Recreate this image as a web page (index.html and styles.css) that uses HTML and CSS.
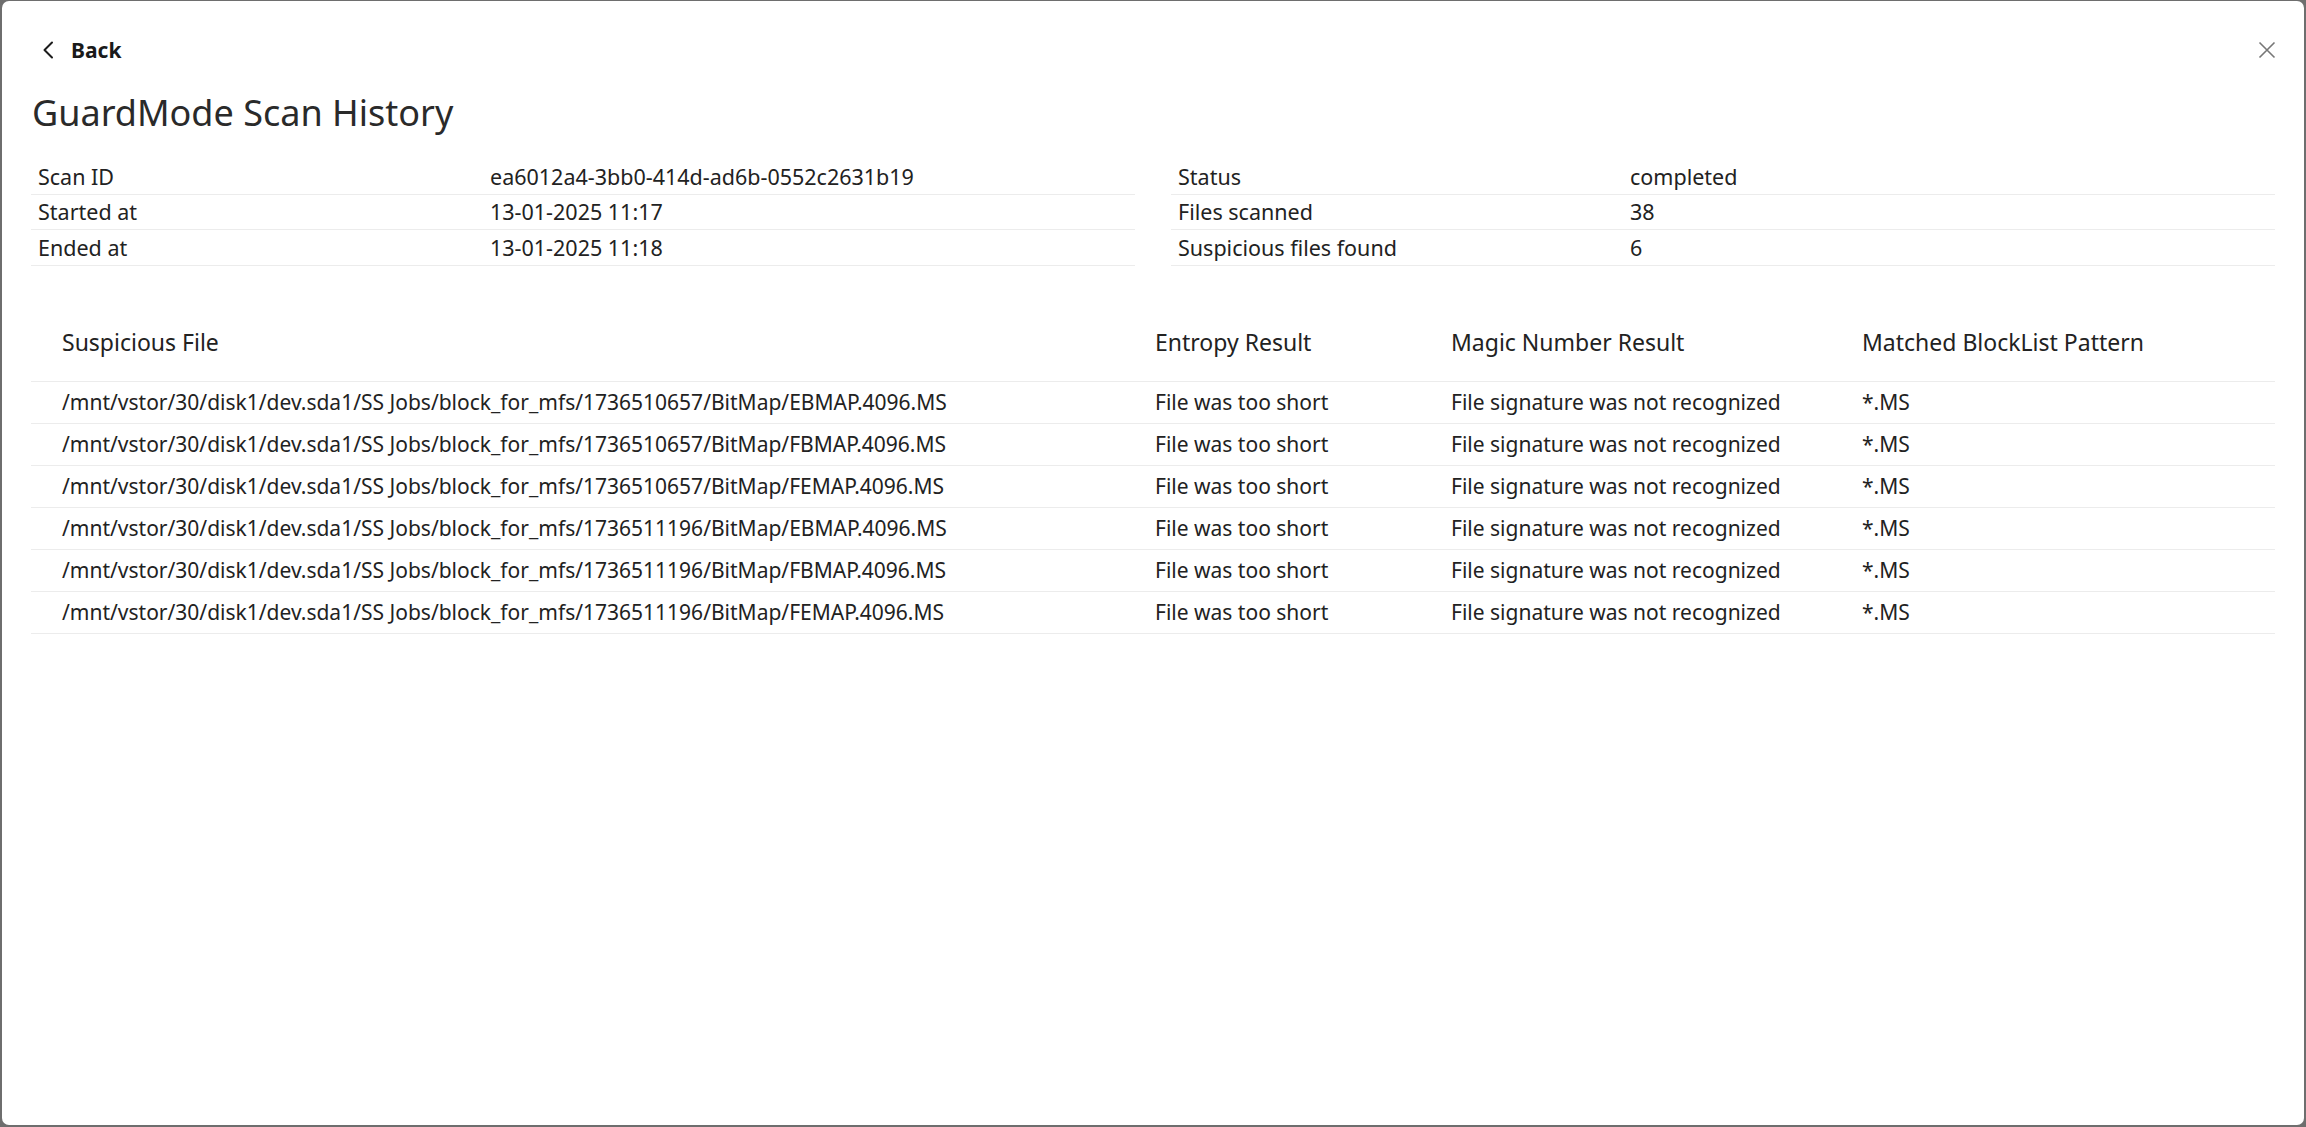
FILE: index.html
```html
<!DOCTYPE html>
<html lang="en">
<head>
    <meta charset="UTF-8">
    <meta name="viewport" content="width=device-width, initial-scale=1.0">
    <title>GuardMode Scan History</title>
    <link rel="stylesheet" href="styles.css">
</head>
<body>
    <div class="dialog">
        <div class="top-bar">
            <button class="back-btn">
                <svg class="back-icon" width="12" height="18" viewBox="0 0 12 18"><path d="M10 1.5 L2.5 9 L10 16.5" fill="none" stroke="#1c1c1c" stroke-width="2" stroke-linecap="round" stroke-linejoin="round"/></svg>
                <span>Back</span>
            </button>
            <button class="close-btn" aria-label="Close">
                <svg width="18" height="18" viewBox="0 0 18 18"><path d="M1.5 1.5 L16.5 16.5 M16.5 1.5 L1.5 16.5" fill="none" stroke="#777" stroke-width="1.6"/></svg>
            </button>
        </div>

        <h1 class="title">GuardMode Scan History</h1>

        <div class="summary">
            <div class="summary-table">
                <div class="summary-row"><div class="cell">Scan ID</div><div class="cell">ea6012a4-3bb0-414d-ad6b-0552c2631b19</div></div>
                <div class="summary-row"><div class="cell">Started at</div><div class="cell">13-01-2025 11:17</div></div>
                <div class="summary-row"><div class="cell">Ended at</div><div class="cell">13-01-2025 11:18</div></div>
            </div>
            <div class="summary-table">
                <div class="summary-row"><div class="cell">Status</div><div class="cell">completed</div></div>
                <div class="summary-row"><div class="cell">Files scanned</div><div class="cell">38</div></div>
                <div class="summary-row"><div class="cell">Suspicious files found</div><div class="cell">6</div></div>
            </div>
        </div>

        <table class="files-table">
            <thead>
                <tr>
                    <th class="col-file">Suspicious File</th>
                    <th class="col-entropy">Entropy Result</th>
                    <th class="col-magic">Magic Number Result</th>
                    <th>Matched BlockList Pattern</th>
                </tr>
            </thead>
            <tbody>
                <tr>
                    <td>/mnt/vstor/30/disk1/dev.sda1/SS Jobs/block_for_mfs/1736510657/BitMap/EBMAP.4096.MS</td>
                    <td>File was too short</td>
                    <td>File signature was not recognized</td>
                    <td>*.MS</td>
                </tr>
                <tr>
                    <td>/mnt/vstor/30/disk1/dev.sda1/SS Jobs/block_for_mfs/1736510657/BitMap/FBMAP.4096.MS</td>
                    <td>File was too short</td>
                    <td>File signature was not recognized</td>
                    <td>*.MS</td>
                </tr>
                <tr>
                    <td>/mnt/vstor/30/disk1/dev.sda1/SS Jobs/block_for_mfs/1736510657/BitMap/FEMAP.4096.MS</td>
                    <td>File was too short</td>
                    <td>File signature was not recognized</td>
                    <td>*.MS</td>
                </tr>
                <tr>
                    <td>/mnt/vstor/30/disk1/dev.sda1/SS Jobs/block_for_mfs/1736511196/BitMap/EBMAP.4096.MS</td>
                    <td>File was too short</td>
                    <td>File signature was not recognized</td>
                    <td>*.MS</td>
                </tr>
                <tr>
                    <td>/mnt/vstor/30/disk1/dev.sda1/SS Jobs/block_for_mfs/1736511196/BitMap/FBMAP.4096.MS</td>
                    <td>File was too short</td>
                    <td>File signature was not recognized</td>
                    <td>*.MS</td>
                </tr>
                <tr>
                    <td>/mnt/vstor/30/disk1/dev.sda1/SS Jobs/block_for_mfs/1736511196/BitMap/FEMAP.4096.MS</td>
                    <td>File was too short</td>
                    <td>File signature was not recognized</td>
                    <td>*.MS</td>
                </tr>
            </tbody>
        </table>
    </div>
</body>
</html>
```

FILE: styles.css
```css
html { background-color: #6e6e6e; }
body { margin: 0; padding: 1px 2px 2px 2px; font-family: "Noto Sans", Lato, sans-serif; color: #222; }
.dialog { box-sizing: border-box; height: calc(100vh - 3px); background: #fff; border-radius: 7px; padding: 0 29px; }

.top-bar { display: flex; justify-content: space-between; align-items: center; height: 98px; }
.back-btn { display: flex; align-items: center; gap: 17px; margin-left: 11px; padding: 0; border: none; background: none; font-family: inherit; font-size: 21px; font-weight: bold; color: #1a1a1a; cursor: pointer; }
.back-icon { display: block; }
.close-btn { display: flex; margin-right: -1px; padding: 0; border: none; background: none; cursor: pointer; }

.title { margin: -11px 0 0 1px; font-size: 36px; font-weight: normal; color: #2a2a2a; line-height: 50px; }

.summary { display: grid; grid-template-columns: 1fr 1fr; gap: 36px; margin-top: 21px; }
.summary-row { display: grid; grid-template-columns: 452px 1fr; height: 35.5px; align-items: center; border-bottom: 1px solid #ececec; box-sizing: border-box; font-size: 21.5px; color: #222; }
.summary-row .cell { padding-left: 7px; }

.files-table { width: 100%; border-collapse: collapse; table-layout: fixed; margin-top: 38px; font-size: 21px; color: #222; }
.files-table th, .files-table td { text-align: left; padding: 0 0 0 31px; border-bottom: 1px solid #ececec; white-space: nowrap; }
.files-table th { height: 77px; font-size: 23px; font-weight: normal; }
.files-table td { height: 41px; }
.col-file { width: 1062px; }
.col-entropy { width: 265px; }
.col-magic { width: 380px; }
```
